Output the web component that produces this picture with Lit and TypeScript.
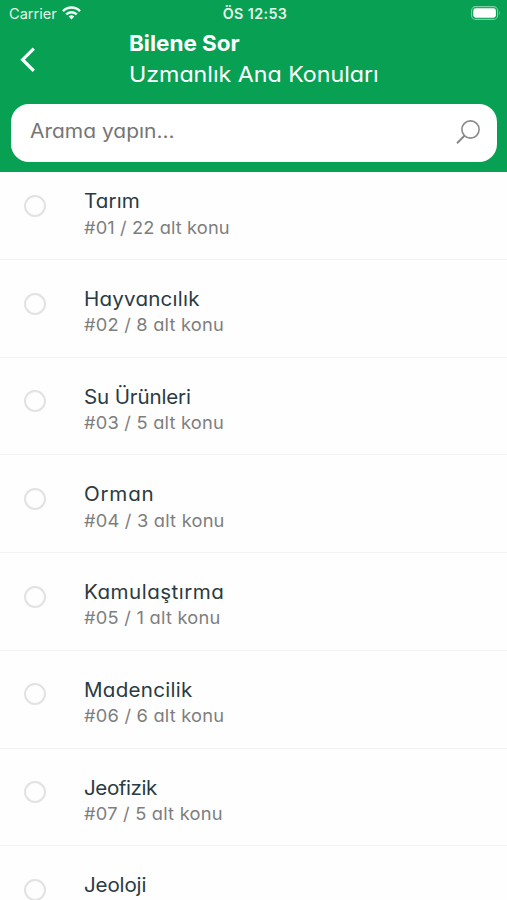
import { LitElement, html, css } from "lit";
import { customElement, property } from "lit/decorators.js";
import { styleMap } from "lit/directives/style-map.js";

interface Topic {
  name: string;
  detail?: string;
  nameTracking: number;
  detailTracking: number;
}

const topics: Topic[] = [
  { name: "Tarım", detail: "#01 / 22 alt konu", nameTracking: 0.1, detailTracking: 0.1 },
  { name: "Hayvancılık", detail: "#02 / 8 alt konu", nameTracking: 0.2, detailTracking: 0.2 },
  { name: "Su Ürünleri", detail: "#03 / 5 alt konu", nameTracking: -0.15, detailTracking: 0.2 },
  { name: "Orman", detail: "#04 / 3 alt konu", nameTracking: 0.75, detailTracking: 0.2 },
  { name: "Kamulaştırma", detail: "#05 / 1 alt konu", nameTracking: 0.45, detailTracking: 0.23 },
  { name: "Madencilik", detail: "#06 / 6 alt konu", nameTracking: 0.25, detailTracking: 0.2 },
  { name: "Jeofizik", detail: "#07 / 5 alt konu", nameTracking: -0.4, detailTracking: 0.2 },
  { name: "Jeoloji", nameTracking: -0.15, detailTracking: 0 },
];

@customElement("topic-row")
class TopicRow extends LitElement {
  @property({ attribute: false }) topic!: Topic;

  static styles = css`
    :host {
      display: flex;
      box-sizing: border-box;
      height: 97.7px;
      flex: none;
      padding: 27px 24px 0;
      border-bottom: 1px solid #f3f3f3;
    }
    .radio {
      box-sizing: border-box;
      width: 22px;
      height: 22px;
      margin: 5.5px 38px 0 0;
      border: 2px solid #e2e2e2;
      border-radius: 50%;
    }
    .text {
      display: flex;
      flex-direction: column;
      align-items: flex-start;
      white-space: nowrap;
    }
    .name,
    .detail {
      transform: scaleX(1.05);
      transform-origin: left;
    }
    .name {
      font-size: 19.6px;
      line-height: 24px;
      color: #2a3b43;
    }
    .detail {
      margin-top: 2.2px;
      font-size: 17.4px;
      line-height: 24px;
      color: #7e7e7e;
    }
  `;

  render() {
    const t = this.topic;
    return html`
      <div class="radio"></div>
      <div class="text">
        <span class="name" style=${styleMap({ letterSpacing: `${t.nameTracking}px` })}>${t.name}</span>
        ${t.detail
          ? html`<span class="detail" style=${styleMap({ letterSpacing: `${t.detailTracking}px` })}>${t.detail}</span>`
          : null}
      </div>
    `;
  }
}

@customElement("app-root")
class AppRoot extends LitElement {
  static styles = css`
    :host {
      display: flex;
      flex-direction: column;
      height: 900px;
      overflow: hidden;
      background: #fefefe;
      font-family: Inter, "Open Sans", sans-serif;
      font-feature-settings: "cv11";
    }
    .header {
      flex: none;
      box-sizing: border-box;
      height: 172px;
      background: #08a053;
      color: #fff;
    }
    .status {
      display: grid;
      grid-template-columns: 1fr auto 1fr;
      align-items: center;
      height: 27px;
      padding: 0 6px 0 9px;
      font-size: 14.6px;
      font-feature-settings: normal;
      color: #e3f5ea;
    }
    .carrier {
      display: flex;
      align-items: center;
      gap: 5px;
    }
    .carrier svg {
      margin-top: -2px;
    }
    .time {
      font-size: 14.3px;
      font-weight: 600;
      letter-spacing: 0.4px;
    }
    .battery {
      justify-self: end;
      margin: -1px 0 0;
    }
    .nav {
      display: flex;
      height: 77px;
    }
    .back {
      margin: 20px 0 0 18px;
      width: 111px;
      flex: none;
    }
    .titles {
      display: flex;
      flex-direction: column;
      align-items: flex-start;
      white-space: nowrap;
    }
    .title,
    .subtitle,
    .placeholder {
      transform-origin: left;
    }
    .title {
      margin-top: 1px;
      font-size: 21.6px;
      line-height: 30px;
      font-weight: 700;
      transform: scaleX(1.04);
    }
    .subtitle {
      font-size: 21.8px;
      line-height: 32px;
      transform: scaleX(1.064);
    }
    .search {
      display: flex;
      justify-content: space-between;
      box-sizing: border-box;
      height: 58px;
      margin: 0 10px 0 11px;
      padding: 14px 15px 0 19px;
      border-radius: 18px;
      background: #fff;
      color: #757575;
      font-size: 19.8px;
      line-height: 26px;
    }
    .placeholder {
      height: 26px;
      transform: scaleX(1.06);
    }
    .list {
      flex: 1;
      min-height: 0;
      display: flex;
      flex-direction: column;
      overflow: hidden;
    }
    .list topic-row:first-child {
      margin-top: -9.6px;
    }
    svg {
      display: block;
    }
  `;

  render() {
    return html`
      <header class="header">
        <div class="status">
          <div class="carrier">
            <span class="carrier-name">Carrier</span>
            <svg width="19" height="14" viewBox="0 0 19 14" fill="none" stroke="#f4fff8" stroke-width="2.4">
              <path d="M1 5.1a12 12 0 0 1 17 0" />
              <path d="M4.2 8.4a7.5 7.5 0 0 1 10.6 0" />
              <path d="M9.5 13.4 6.7 10.6a4 4 0 0 1 5.6 0Z" fill="#f4fff8" stroke="none" />
            </svg>
          </div>
          <span class="time">ÖS 12:53</span>
          <svg class="battery" width="30" height="14" viewBox="0 0 30 14">
            <rect x="0.6" y="0.6" width="26" height="12.8" rx="4" fill="none" stroke="#7fcda2" stroke-width="1.1" />
            <rect x="2.3" y="2.3" width="22.6" height="9.4" rx="2.4" fill="#fff" />
            <path d="M28.1 4.8q1.6 2.2 0 4.4Z" fill="#7fcda2" />
          </svg>
        </div>
        <div class="nav">
          <svg class="back" width="111" height="26" viewBox="0 0 111 26" fill="none" stroke="#fff" stroke-width="3.2">
            <path d="M15.8 1.6 4.6 12.7 15.8 23.8" />
          </svg>
          <div class="titles">
            <span class="title">Bilene Sor</span>
            <span class="subtitle">Uzmanlık Ana Konuları</span>
          </div>
        </div>
        <div class="search">
          <span class="placeholder">Arama yapın...</span>
          <svg width="26" height="28" viewBox="0 0 26 28" fill="none" stroke="#8a8a8a" stroke-width="1.6">
            <circle cx="14.5" cy="11.5" r="8.6" />
            <path d="M8.4 17.8 1 25.3" stroke-width="2" />
          </svg>
        </div>
      </header>
      <main class="list">${topics.map((t) => html`<topic-row .topic=${t}></topic-row>`)}</main>
    `;
  }
}
